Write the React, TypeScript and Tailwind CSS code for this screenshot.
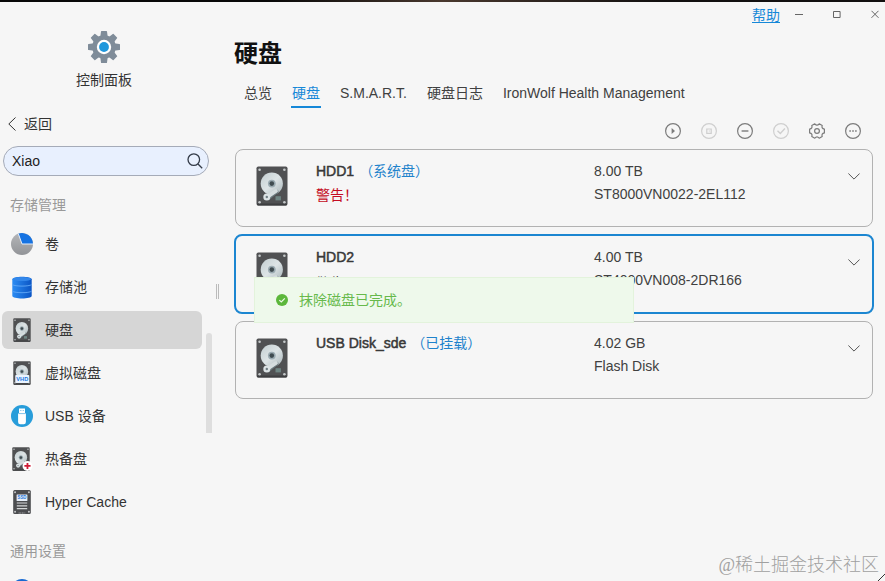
import type { ReactNode } from "react";
import clsx from "clsx";

function GearLogo() {
  return (
    <svg width="32" height="32" viewBox="0 0 32 32">
      <g fill="#7f8c99">
        <circle cx="16" cy="16" r="11.8" />
        {[0, 45, 90, 135].map((a) => (
          <path key={a} d="M13 0.6Q13 0 13.6 0H18.4Q19 0 19 0.6L20 8V24L19 31.4Q19 32 18.4 32H13.6Q13 32 13 31.4L12 24V8Z" transform={`rotate(${a} 16 16)`} />
        ))}
      </g>
      <circle cx="16" cy="16" r="7.2" fill="#fff" />
      <circle cx="16" cy="16" r="4.9" fill="#1f97dc" />
    </svg>
  );
}

function DriveArt({ children }: { children?: ReactNode }) {
  return (
    <svg className="h-full w-full overflow-visible" viewBox="0 0 32 40" preserveAspectRatio="none">
      <defs>
        <linearGradient id="platter" x1="0" y1="0" x2="1" y2="1">
          <stop offset="0" stopColor="#c3ced1" />
          <stop offset=".5" stopColor="#dde4e6" />
          <stop offset="1" stopColor="#a9b6ba" />
        </linearGradient>
      </defs>
      <rect x="0.5" y="0.5" width="31" height="39" rx="1.8" fill="#505153" />
      <rect x="1" y="37.5" width="30" height="2" rx="1" fill="#3d3e40" />
      <g fill="#c5c9ca">
        <circle cx="3.6" cy="3.8" r="1.3" />
        <circle cx="28.4" cy="3.8" r="1.3" />
        <circle cx="3.6" cy="36.2" r="1.3" />
        <circle cx="28.4" cy="36.2" r="1.3" />
      </g>
      <circle cx="15.8" cy="17.6" r="11.1" fill="url(#platter)" />
      <circle cx="15.8" cy="17.6" r="3.9" fill="#9babb2" />
      <circle cx="15.8" cy="17.6" r="2.3" fill="#3f4b50" />
      <path d="M20.6 25.4 12.2 32.2" stroke="#68777b" strokeWidth="3.8" strokeLinecap="round" />
      <path d="M20 25 11.2 30.8" stroke="#d5dddf" strokeWidth="3.8" strokeLinecap="round" />
      <circle cx="10.8" cy="31" r="3.5" fill="#dce3e5" />
      <circle cx="10.8" cy="31" r="1.2" fill="#707e83" />
      <rect x="19.5" y="30.2" width="5.4" height="4.2" fill="#6e8583" />
      {children}
    </svg>
  );
}

function VolumeIcon() {
  return (
    <svg width="22" height="22" viewBox="0 0 22 22">
      <defs>
        <linearGradient id="vol" x1="0" y1="0" x2="0" y2="1">
          <stop offset="0" stopColor="#b5b6b9" />
          <stop offset="1" stopColor="#929498" />
        </linearGradient>
      </defs>
      <circle cx="11" cy="11" r="11" fill="url(#vol)" />
      <path d="M11 11L7.3 .7A11 11 0 0 1 22 11Z" fill="#1673e2" />
      <path d="M7.3.7 11 11H22" fill="none" stroke="#e6eefa" strokeWidth="1" />
    </svg>
  );
}

function PoolIcon() {
  return (
    <svg width="20" height="23" viewBox="0 0 20 23">
      <defs>
        <linearGradient id="pool" x1="0" y1="0" x2="1" y2="0">
          <stop offset="0" stopColor="#2b8cf3" />
          <stop offset="1" stopColor="#0b55c4" />
        </linearGradient>
      </defs>
      <path d="M.3 3.2C.3-.2 19.7-.2 19.7 3.2V19.8C19.7 23.4.3 23.4.3 19.8Z" fill="url(#pool)" />
      <ellipse cx="10" cy="3" rx="9.3" ry="2" fill="#3387ea" />
      <path d="M.3 8.6C3 10.6 17 10.6 19.7 8.6M.3 15.2C3 17.2 17 17.2 19.7 15.2" fill="none" stroke="#62a8f6" strokeWidth=".9" />
    </svg>
  );
}

function UsbIcon() {
  return (
    <svg width="22" height="22" viewBox="0 0 22 22">
      <circle cx="11" cy="11" r="11" fill="#289dda" />
      <path d="M8 3.5h6v5h.9V17q0 2.2-2.2 2.2H9.3Q7.1 19.2 7.1 17V8.5H8Z" fill="#fff" />
      <path d="M9.2 5.5h1.2M11.7 5.5h1.2M8 8.6h6" stroke="#80c3e8" strokeWidth="1" />
    </svg>
  );
}

function CacheIcon() {
  return (
    <svg width="18" height="24" viewBox="0 0 19 24" preserveAspectRatio="none">
      <rect x=".2" width="18.6" height="24" rx="1.5" fill="#4c4d50" />
      <g fill="#c8cacc">
        <circle cx="2.2" cy="2.3" r="1" />
        <circle cx="16.8" cy="2.3" r="1" />
        <circle cx="2.2" cy="21.7" r="1" />
        <circle cx="16.8" cy="21.7" r="1" />
      </g>
      <rect x="3.8" y="4.5" width="11.4" height="6.5" rx=".5" fill="#e7eef8" />
      <text x="9.5" y="9.5" fontSize="4.6" fontWeight="700" fill="#2678dc" textAnchor="middle">SSD</text>
      <path d="M4 13H15M4 15.8H15M4 18.6H15" stroke="#d4d6d8" strokeWidth="1.2" />
      <path d="M6 23H13" stroke="#b6b8ba" strokeWidth="1" strokeDasharray="1 .7" />
    </svg>
  );
}

const driveIcon = (extra?: ReactNode) => (
  <span className="block h-6 w-[18px]">
    <DriveArt>{extra}</DriveArt>
  </span>
);

const vhdBadge = (
  <>
    <rect x="4" y="23.5" width="25" height="13" rx="1.5" fill="#eaf4ff" />
    <text x="16.5" y="33.5" fontSize="10" fontWeight="700" fill="#1877e0" textAnchor="middle">VHD</text>
  </>
);

const spareBadge = (
  <>
    <ellipse cx="27.5" cy="31.5" rx="8.8" ry="8.3" fill="#fff" />
    <path d="M27.5 26.5V36.5M22 31.5H33" stroke="#cf1b35" strokeWidth="3.2" />
  </>
);

const navItems = [
  { label: "卷", icon: <VolumeIcon /> },
  { label: "存储池", icon: <PoolIcon /> },
  { label: "硬盘", icon: driveIcon(), active: true },
  { label: "虚拟磁盘", icon: driveIcon(vhdBadge) },
  { label: "USB 设备", icon: <UsbIcon /> },
  { label: "热备盘", icon: driveIcon(spareBadge), shift: true },
  { label: "Hyper Cache", icon: <CacheIcon /> },
];

const tabs = ["总览", "硬盘", "S.M.A.R.T.", "硬盘日志", "IronWolf Health Management"];

const disks = [
  { name: "HDD1", tag: "（系统盘）", status: "警告！", size: "8.00 TB", model: "ST8000VN0022-2EL112" },
  { name: "HDD2", status: "警告！", size: "4.00 TB", model: "ST4000VN008-2DR166", selected: true },
  { name: "USB Disk_sde", tag: "（已挂载）", size: "4.02 GB", model: "Flash Disk" },
];

function Sidebar() {
  return (
    <aside className="relative flex w-[219px] shrink-0 flex-col">
      <div className="flex w-[208px] flex-col items-center pt-[29px]">
        <GearLogo />
        <span className="mt-[5px] leading-6">控制面板</span>
      </div>
      <button className="mt-5 flex h-6 items-center gap-2 pl-2">
        <svg width="8" height="14" viewBox="0 0 8 14" fill="none" stroke="#333">
          <path d="M7.5.5.8 7l6.7 6.5" />
        </svg>
        返回
      </button>
      <div className="mt-[10px] ml-[3px] flex h-[30px] w-[206px] items-center justify-between rounded-full border border-[#a5abb8] bg-[#e8f0fe] pr-[5px] pl-2 text-[#222]">
        <span>Xiao</span>
        <svg width="16" height="16" viewBox="0 0 16 16" fill="none" stroke="#333b48" strokeWidth="1.3">
          <circle cx="6.8" cy="6.6" r="5.8" />
          <path d="m11 11 4.2 4.2" />
        </svg>
      </div>
      <h2 className="mt-[17px] ml-[10px] h-6 leading-6 text-[#999]">存储管理</h2>
      <nav className="mt-2 ml-[2px] flex w-[200px] flex-col gap-[5px]">
        {navItems.map((item) => (
          <a key={item.label} className={clsx("flex h-[38px] items-center rounded-md", item.active && "bg-[#d6d6d6]")}>
            <span className={clsx("flex w-10 justify-center", item.shift && "pr-[2px]")}>{item.icon}</span>
            <span className="ml-[3px]">{item.label}</span>
          </a>
        ))}
      </nav>
      <h2 className="mt-[18px] ml-[10px] h-6 leading-6 text-[#999]">通用设置</h2>
      <div className="mt-4 ml-[11px] h-[22px] w-[22px] shrink-0 rounded-full bg-[#1769d2]" />
      <div className="absolute top-[331px] left-[206px] h-[100px] w-[6px] rounded-t-sm bg-[#dedede]" />
      <div className="absolute top-[282px] left-[216px] h-[15px] w-[3px] border-x border-[#bbb]" />
    </aside>
  );
}

function WindowControls() {
  return (
    <div className="flex h-[26px] items-center justify-end pr-[6px] text-[#666]">
      <a className="mr-[15px] text-[#1688d8] underline underline-offset-2">帮助</a>
      <svg width="8" height="8" viewBox="0 0 8 8" className="mr-[30px] mb-[2px]" stroke="currentColor">
        <path d="M0 4.5h8" />
      </svg>
      <svg width="8" height="8" viewBox="0 0 8 8" className="mr-[30px] mb-[2px]" fill="none" stroke="currentColor">
        <path d="M.5 1.5h6.6v6H.5Z" />
      </svg>
      <svg width="8" height="8" viewBox="0 0 8 8" className="mb-[2px]" fill="none" stroke="currentColor">
        <path d="m.5.8 7 7m0-7-7 7" />
      </svg>
    </div>
  );
}

const actions = [
  { id: "play", shape: <path d="M6.6 5 10 8 6.6 11Z" fill="currentColor" stroke="none" /> },
  { id: "stop", disabled: true, shape: <path d="M5.8 6h4.4v4.4H5.8ZM7.8 8h1" /> },
  { id: "remove", shape: <path d="M4.6 8h6.8" strokeWidth="1.4" /> },
  { id: "check", disabled: true, shape: <path d="m4.5 7.7 2.8 2.8 4.6-5" strokeWidth="1.4" /> },
  { id: "settings" },
  { id: "more", shape: <path d="M4.3 8h1.6M7.2 8h1.6M10.1 8h1.6" strokeWidth="1.4" /> },
];

function Toolbar() {
  return (
    <div className="flex justify-end gap-5 pr-6">
      {actions.map((action) => (
        <button key={action.id} className={action.disabled ? "text-[#cfcfcf]" : "text-[#7c7c7c]"}>
          <svg width="16" height="16" viewBox="0 0 16 16" fill="none" stroke="currentColor" strokeWidth="1.2" className="overflow-visible">
            {action.id === "settings" ? (
              <>
                <path d="M10.2.8 13.2 2.6Q12.2 5.4 15.4 6.1V9.9Q12.2 10.6 13.2 13.4L10.2 15.2Q8 12.6 5.8 15.2L2.8 13.4Q3.8 10.6.6 9.9V6.1Q3.8 5.4 2.8 2.6L5.8.8Q8 3.4 10.2.8Z" strokeLinejoin="round" />
                <circle cx="8" cy="8" r="2.4" />
              </>
            ) : (
              <>
                <circle cx="8" cy="8" r="7.4" />
                {action.shape}
              </>
            )}
          </svg>
        </button>
      ))}
    </div>
  );
}

function DiskCard({ disk }: { disk: (typeof disks)[number] }) {
  return (
    <div className={clsx("flex rounded-lg", disk.selected ? "-mx-px h-20 border-2 border-[#1c86d1]" : "h-[78px] border border-[#b2b2b2]")}>
      <div className="mt-4 ml-5 h-10 w-8">
        <DriveArt />
      </div>
      <div className="mt-[9px] ml-7 w-[278px]">
        <div className="flex h-6 items-center gap-[5px]">
          <span className="text-[#383838] [-webkit-text-stroke:0.5px_#383838]">{disk.name}</span>
          {disk.tag && <span className="text-[#1f83cc]">{disk.tag}</span>}
        </div>
        {disk.status && <div className={clsx("h-6", disk.selected ? "leading-[28px] text-[#444]" : "leading-[25px] text-[#c40d24]")}>{disk.status}</div>}
      </div>
      <div className="mt-[10px] flex-1 leading-[23px] text-[#404040]">
        <p>{disk.size}</p>
        <p>{disk.model}</p>
      </div>
      <svg className="mt-[23px] mr-3" width="12" height="7" viewBox="0 0 12 7" fill="none" stroke="#555">
        <path d="M.4.5 6 6.1 11.6.5" />
      </svg>
    </div>
  );
}

export default function App() {
  return (
    <div className="relative flex h-[581px] w-[885px] flex-col overflow-hidden bg-[#f6f6f6] font-['Liberation_Sans','Noto_Sans_CJK_SC',sans-serif] text-sm text-[#333]">
      <div className="h-[2px] shrink-0 bg-linear-to-r from-[#080808] from-30% via-[#49382e] via-50% to-[#121010] to-75%" />
      <div className="flex flex-1">
        <Sidebar />
        <main className="flex-1 pl-4">
          <WindowControls />
          <h1 className="mt-[10px] -ml-px h-8 text-2xl leading-8 font-bold text-[#111]">硬盘</h1>
          <div className="mt-[11px] ml-[9px] flex gap-5">
            {tabs.map((tab, i) => (
              <a key={tab} className={clsx("h-[27px] leading-6", i === 1 ? "-mx-px border-b-2 border-[#1688d8] px-px text-[#1688d8]" : "text-[#404040]")}>
                {tab}
              </a>
            ))}
          </div>
          <div className="mt-[15px] flex h-4 justify-end">
            <Toolbar />
          </div>
          <div className="relative mt-[10px] mr-3 flex flex-col gap-2">
            {disks.map((disk) => (
              <div key={disk.name} className={disk.selected ? "-my-px" : ""}>
                <DiskCard disk={disk} />
              </div>
            ))}
            <div className="absolute top-[128px] left-[19px] flex h-[46px] w-[380px] items-center border border-[#e3f3dc] bg-[#eef9eb] pl-[21px] text-[#67b94b]">
              <svg width="12" height="12" viewBox="0 0 12 12" className="mr-[11px]">
                <circle cx="6" cy="6" r="6" fill="#5cb73b" />
                <path d="M3.3 6.1 5.3 8 8.8 4.3" fill="none" stroke="#eef9eb" strokeWidth="1.2" />
              </svg>
              抹除磁盘已完成。
            </div>
          </div>
        </main>
      </div>
      <span className="absolute right-[6px] bottom-1 font-['Liberation_Serif','Noto_Sans_CJK_SC',serif] text-lg leading-6 font-light text-[#a0a0a0]">@稀土掘金技术社区</span>
      <svg className="absolute right-0 bottom-0" width="7" height="7" viewBox="0 0 7 7" stroke="#333">
        <path d="M0 7 7 0" />
      </svg>
    </div>
  );
}
